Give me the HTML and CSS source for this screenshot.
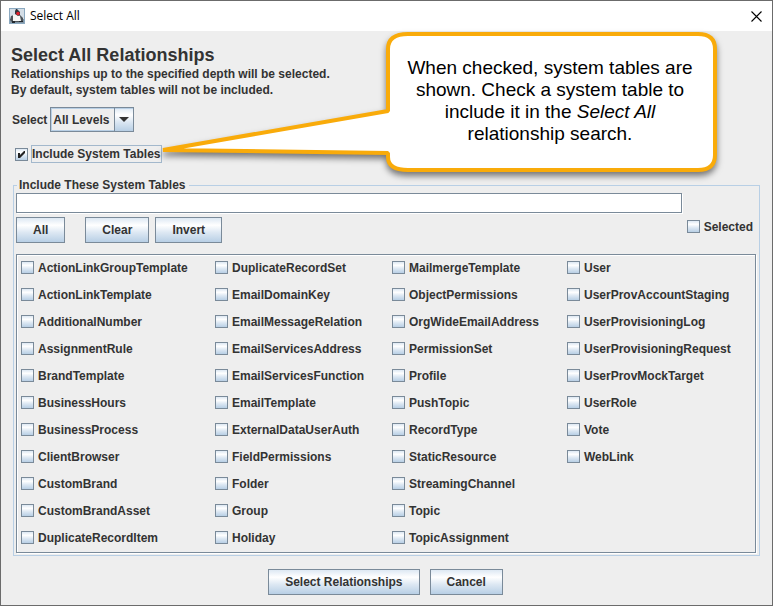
FILE: index.html
```html
<!DOCTYPE html>
<html lang="en">
<head>
  <meta charset="UTF-8">
  <title>Select All</title>
  <link rel="stylesheet" href="styles.css">
</head>
<body>
  <div class="window">
    <header class="titlebar">
      <svg class="app-icon" width="16" height="16" viewBox="0 0 16 16" aria-hidden="true">
        <rect width="16" height="16" fill="#8ba9c0"/>
        <rect x="1" y="1" width="14" height="10" fill="#d3dde6"/>
        <rect x="1" y="11" width="14" height="4" fill="#8295a4"/>
        <path d="M2 8l3-1h6l3 3v3l-2 1H3l-2-2z" fill="#4b5258"/>
        <path d="M4 7l4-1 3 2 1 5H4z" fill="#f6f6f4"/>
        <path d="M7 1h1l3 3v3L9 8 6 6V3z" fill="#30343a"/>
        <circle cx="9" cy="5.5" r="1.8" fill="#e0202c"/>
        <path d="M3 13h3v2H3zM10 13h4v1h-4z" fill="#23282d"/>
      </svg>
      <span class="titlebar-text">Select All</span>
      <button class="close" type="button" aria-label="Close">
        <svg width="11" height="11" viewBox="0 0 11 11"><path d="M.5 .5l10 10M10.5 .5l-10 10" stroke="#000" stroke-width="1.1"/></svg>
      </button>
    </header>

    <form class="content">
      <h1>Select All Relationships</h1>
      <p class="intro">Relationships up to the specified depth will be selected.<br>By default, system tables will not be included.</p>

      <div class="level">
        <label for="depth">Select</label>
        <span class="combo">
          <select id="depth" name="depth">
            <option>All Levels</option>
          </select>
          <svg class="combo-arrow" width="10" height="5" viewBox="0 0 10 5" aria-hidden="true"><path d="M0 0h10L5 5z" fill="#333"/></svg>
        </span>
      </div>

      <div class="include">
        <input type="checkbox" id="include" checked>
        <label for="include">Include System Tables</label>
      </div>

      <fieldset class="tables">
        <legend>Include These System Tables</legend>
        <div class="filter">
          <div class="filter-main">
            <input class="search" type="text" aria-label="Filter tables">
            <div class="filter-buttons">
              <button class="btn all" type="button">All</button>
              <button class="btn" type="button">Clear</button>
              <button class="btn" type="button">Invert</button>
            </div>
          </div>
          <label class="check selected"><input type="checkbox">Selected</label>
        </div>

        <div class="list">
          <div class="column">
            <label class="check"><input type="checkbox">ActionLinkGroupTemplate</label>
            <label class="check"><input type="checkbox">ActionLinkTemplate</label>
            <label class="check"><input type="checkbox">AdditionalNumber</label>
            <label class="check"><input type="checkbox">AssignmentRule</label>
            <label class="check"><input type="checkbox">BrandTemplate</label>
            <label class="check"><input type="checkbox">BusinessHours</label>
            <label class="check"><input type="checkbox">BusinessProcess</label>
            <label class="check"><input type="checkbox">ClientBrowser</label>
            <label class="check"><input type="checkbox">CustomBrand</label>
            <label class="check"><input type="checkbox">CustomBrandAsset</label>
            <label class="check"><input type="checkbox">DuplicateRecordItem</label>
          </div>
          <div class="column">
            <label class="check"><input type="checkbox">DuplicateRecordSet</label>
            <label class="check"><input type="checkbox">EmailDomainKey</label>
            <label class="check"><input type="checkbox">EmailMessageRelation</label>
            <label class="check"><input type="checkbox">EmailServicesAddress</label>
            <label class="check"><input type="checkbox">EmailServicesFunction</label>
            <label class="check"><input type="checkbox">EmailTemplate</label>
            <label class="check"><input type="checkbox">ExternalDataUserAuth</label>
            <label class="check"><input type="checkbox">FieldPermissions</label>
            <label class="check"><input type="checkbox">Folder</label>
            <label class="check"><input type="checkbox">Group</label>
            <label class="check"><input type="checkbox">Holiday</label>
          </div>
          <div class="column">
            <label class="check"><input type="checkbox">MailmergeTemplate</label>
            <label class="check"><input type="checkbox">ObjectPermissions</label>
            <label class="check"><input type="checkbox">OrgWideEmailAddress</label>
            <label class="check"><input type="checkbox">PermissionSet</label>
            <label class="check"><input type="checkbox">Profile</label>
            <label class="check"><input type="checkbox">PushTopic</label>
            <label class="check"><input type="checkbox">RecordType</label>
            <label class="check"><input type="checkbox">StaticResource</label>
            <label class="check"><input type="checkbox">StreamingChannel</label>
            <label class="check"><input type="checkbox">Topic</label>
            <label class="check"><input type="checkbox">TopicAssignment</label>
          </div>
          <div class="column">
            <label class="check"><input type="checkbox">User</label>
            <label class="check"><input type="checkbox">UserProvAccountStaging</label>
            <label class="check"><input type="checkbox">UserProvisioningLog</label>
            <label class="check"><input type="checkbox">UserProvisioningRequest</label>
            <label class="check"><input type="checkbox">UserProvMockTarget</label>
            <label class="check"><input type="checkbox">UserRole</label>
            <label class="check"><input type="checkbox">Vote</label>
            <label class="check"><input type="checkbox">WebLink</label>
          </div>
        </div>
      </fieldset>

      <div class="actions">
        <button class="btn" type="submit">Select Relationships</button>
        <button class="btn" type="button">Cancel</button>
      </div>
    </form>

    <aside class="callout">
      <svg class="callout-shape" width="570" height="160" viewBox="0 0 570 160" aria-hidden="true">
        <path d="M248 3H538Q555 3 555 18V124Q555 139 538 139H248Q228 139 228 126V122L3 119L228 80V18Q228 3 248 3Z" fill="#fff" stroke="#f9ab0a" stroke-width="4" stroke-linejoin="bevel"/>
      </svg>
      <p>When checked, system tables are shown. Check a system table to include it in the <em>Select All</em> relationship search.</p>
    </aside>
  </div>
</body>
</html>
```
FILE: styles.css
```css
* {
  box-sizing: border-box;
}

body {
  margin: 0;
  font: bold 12px/16px "Liberation Sans", Arial, sans-serif;
  color: #333;
}

.window {
  position: relative;
  display: flex;
  flex-direction: column;
  min-height: 100vh;
  background: #eee;
  border: 1px solid #6b6b6b;
}

/* title bar */

.titlebar {
  display: flex;
  align-items: center;
  height: 30px;
  padding: 0 10px 0 8px;
  background: #fff;
  color: #000;
}

.titlebar-text {
  flex: 1;
  margin-left: 5px;
  font: 12px/16px "Open Sans", "Noto Sans", sans-serif;
}

.close {
  display: flex;
  padding: 0;
  border: 0;
  background: none;
}

/* form */

.content {
  padding: 13px 12px 10px 10px;
}

h1 {
  margin: 0;
  font-size: 18px;
  line-height: 22px;
}

.intro {
  margin: 0 0 9px;
}

.level {
  display: flex;
  align-items: center;
  gap: 3px;
  margin-left: 1px;
}

.combo {
  position: relative;
}

.combo select {
  appearance: none;
  display: block;
  width: 84px;
  height: 25px;
  padding: 0 2px;
  font: inherit;
  color: inherit;
  border: 1px solid #7a8a99;
  border-radius: 0;
  background: linear-gradient(#dde8f3, #fff 30%, #dde8f3 60%, #b8cfe5) right / 19px 100% no-repeat #eee;
  box-shadow: inset 1px 1px #b8cfe5, inset 0 -1px #b8cfe5;
}

.combo::after {
  content: "";
  position: absolute;
  top: 0;
  bottom: 0;
  right: 19px;
  border-left: 1px solid #7a8a99;
}

.combo-arrow {
  position: absolute;
  top: 10px;
  right: 5px;
}

input[type=checkbox] {
  appearance: none;
  flex: none;
  width: 13px;
  height: 13px;
  margin: 0;
  border: 1px solid #7a8a99;
  background: linear-gradient(#dde8f3, #fff 30%, #dde8f3 60%, #b8cfe5);
}

input[type=checkbox]:checked {
  background:
    url("data:image/svg+xml,%3Csvg xmlns='http://www.w3.org/2000/svg' width='11' height='11' viewBox='0 0 11 11'%3E%3Cpath d='M2 4h2v2l4-4h1v2L4 9H2z' fill='%23222'/%3E%3C/svg%3E") center / 11px 11px no-repeat,
    linear-gradient(#dde8f3, #fff 30%, #dde8f3 60%, #b8cfe5);
}

.include {
  display: flex;
  align-items: center;
  gap: 3px;
  margin: 13px 0 14px 4px;
}

.include label {
  border: 1px solid #a3b8cc;
}

/* system tables */

.tables {
  min-width: 0;
  margin: 0 0 0 2px;
  padding: 0 3px 2px 2px;
  border: 1px solid #b8cfe5;
}

legend {
  margin-left: 1px;
  padding: 0 3px 0 2px;
}

.filter {
  display: flex;
  justify-content: space-between;
  align-items: flex-end;
  margin-bottom: 11px;
}

.filter-main {
  flex: 1;
}

.search {
  display: block;
  width: 100%;
  height: 20px;
  padding: 0 3px;
  font: inherit;
  border: 1px solid #7a8a99;
  box-shadow: 1px 1px #fff;
}

.filter-buttons {
  display: flex;
  gap: 6px;
  margin-top: 4px;
}

.btn {
  height: 26px;
  padding: 0 16px;
  font: inherit;
  color: inherit;
  border: 1px solid #7a8a99;
  background: linear-gradient(#dde8f3, #fff 30%, #dde8f3 60%, #b8cfe5);
}

.btn.all {
  margin-right: 14px;
}

.check {
  display: flex;
  align-items: center;
  gap: 4px;
  height: 27px;
}

.selected {
  margin: 0 3px 3px 5px;
}

.list {
  display: grid;
  grid-template-columns: 194fr 177fr 175fr 188fr;
  padding: 0 0 2px 4px;
  border: 1px solid #7a8a99;
  box-shadow: 1px 1px #fff, inset 1px 1px #fff;
}

.column {
  margin: -1px 0;
}

.actions {
  display: flex;
  justify-content: center;
  gap: 10px;
  margin-top: 13px;
}

/* callout over the dialog */

.callout {
  position: absolute;
  top: 30px;
  left: 159px;
  width: 570px;
  padding: 26px 31px 0 241px;
  font: 19px/22px "Liberation Sans", Arial, sans-serif;
  color: #000;
  text-align: center;
}

.callout p {
  position: relative;
  margin: 0;
}

.callout-shape {
  position: absolute;
  top: 0;
  left: 0;
  overflow: visible;
  filter: drop-shadow(0 4px 3px rgba(0, 0, 0, .5));
}
```
